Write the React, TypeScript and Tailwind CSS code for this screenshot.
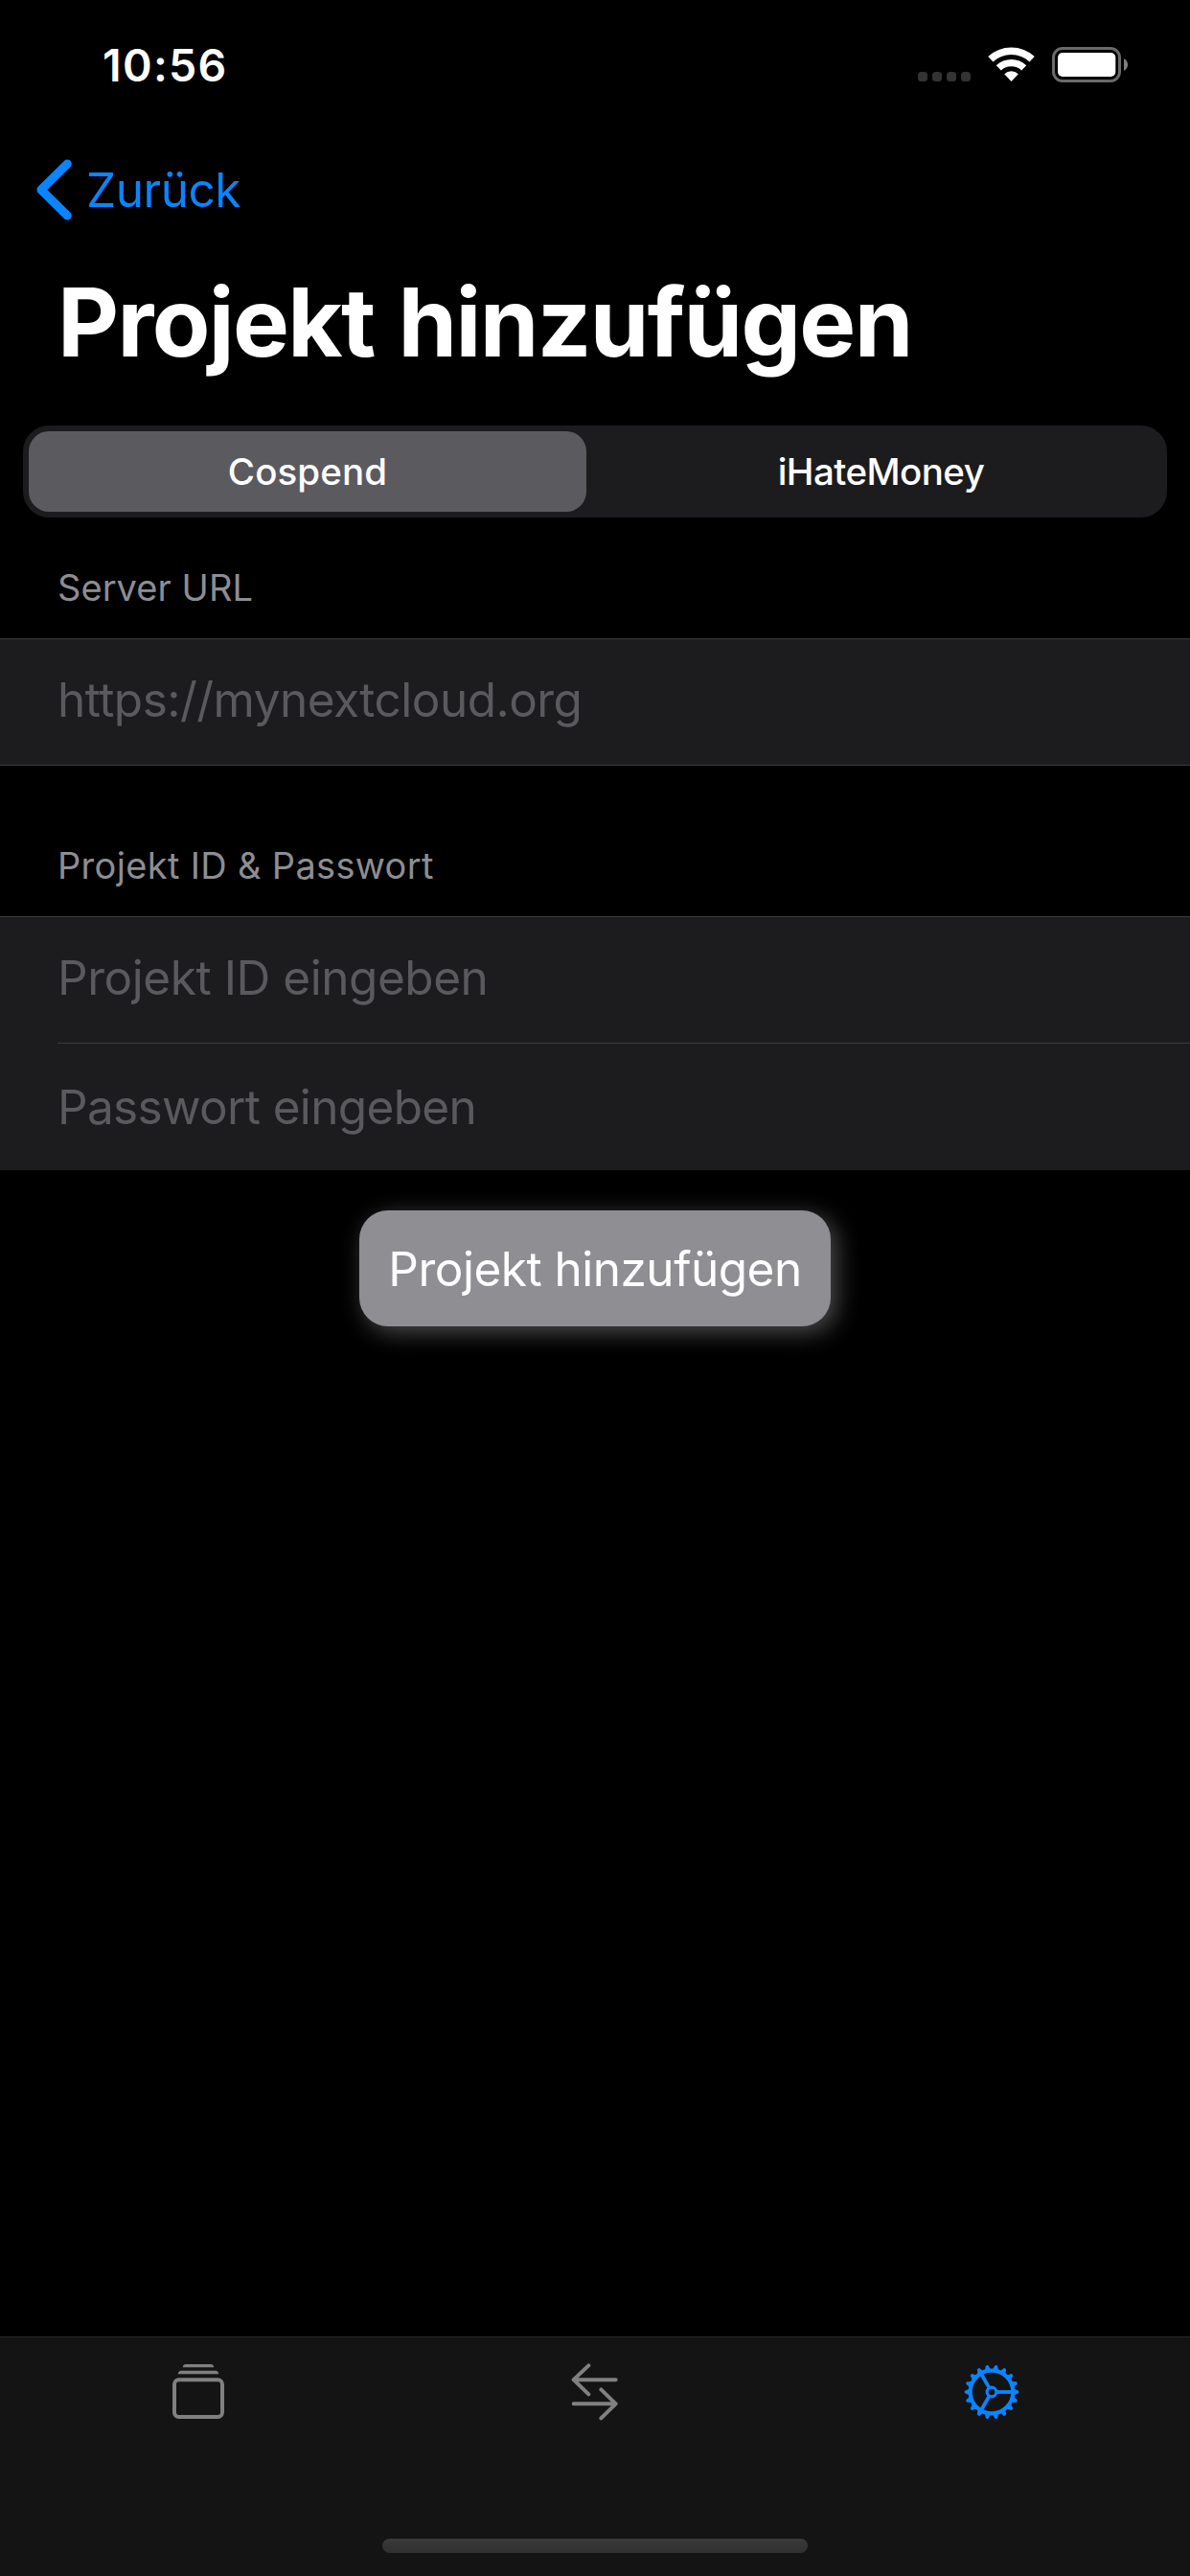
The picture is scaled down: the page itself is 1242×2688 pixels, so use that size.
import React from "react";

function StatusBar() {
  return (
    <header className="flex h-[132px] shrink-0 items-start justify-between pt-[38px] pr-[64px] pl-[107px]">
      <time className="text-[46.5px] leading-[60px] font-semibold tracking-[1.27px]">10:56</time>
      <div className="flex items-center pt-[11px]">
        <div className="mt-[25px] mr-[18px] flex gap-[5px]">
          {[0, 1, 2, 3].map((dot) => (
            <span key={dot} className="size-[10px] rounded-[3.5px] bg-[#333333]" />
          ))}
        </div>
        <svg className="mr-[18px] h-[37px] w-[49px]" viewBox="0 0 49 37" fill="none">
          <path d="M2.85 12.8A31.75 31.75 0 0 1 46.15 12.8" stroke="#fff" strokeWidth="7.6" />
          <path d="M11.3 21.85A19.35 19.35 0 0 1 37.7 21.85" stroke="#fff" strokeWidth="7.4" />
          <path d="M24.5 36L17.2 28.2A10.7 10.7 0 0 1 31.8 28.2Z" fill="#fff" />
        </svg>
        <svg className="h-[37px] w-[80px]" viewBox="0 0 80 37" fill="none">
          <rect x="1.5" y="1.5" width="69" height="34" rx="9.5" stroke="#6a6a6a" strokeWidth="3" />
          <rect x="6" y="6" width="60.3" height="25" rx="5" fill="#fff" />
          <path d="M75 12.3C77.5 13.3 79 15.7 79 18.5S77.5 23.7 75 24.7Z" fill="#808080" />
        </svg>
      </div>
    </header>
  );
}

function NavBar() {
  return (
    <nav className="flex h-[132px] shrink-0 items-center pl-[38px]">
      <button className="flex items-center text-[#0a84ff]">
        <svg className="mr-[14px] h-[64px] w-[38px]" viewBox="0 0 38 64" fill="none">
          <path d="M32.3 5L4.9 32L32.3 59" stroke="currentColor" strokeWidth="9" strokeLinecap="round" strokeLinejoin="round" />
        </svg>
        <span className="text-[49.5px] leading-[64px] tracking-[-0.45px]">Zurück</span>
      </button>
    </nav>
  );
}

function SegmentedControl() {
  return (
    <div className="mx-[24px] mt-[24px] flex h-[96px] shrink-0 rounded-[27px] bg-[#1c1c1e] p-[6px] text-[38.5px] leading-[48px] font-medium">
      <button className="flex w-[582px] items-center justify-center rounded-[21px] bg-[#5b5a5f] tracking-[0.1px]">Cospend</button>
      <button className="flex flex-1 items-center justify-center pl-[15px] tracking-[-0.56px]">iHateMoney</button>
    </div>
  );
}

function StackIcon() {
  return (
    <svg className="h-[58px] w-[54px]" viewBox="90 141 162 174" fill="none">
      <path d="M122 151Q124 141 132 141H210Q218 141 220 151Z" fill="#808080" />
      <path d="M107 171.500Q109 161 117 161H225Q233 161 235 171.500Z" fill="#808080" />
      <rect x="96" y="190" width="150" height="116" rx="14" stroke="#808080" strokeWidth="12" />
    </svg>
  );
}

function ArrowsIcon() {
  return (
    <svg className="h-[60px] w-[50px]" viewBox="109 137 150 180" fill="none" stroke="#808080" strokeWidth="12" strokeLinecap="round" strokeLinejoin="round">
      <path d="M249 188.500H117M164 144L117 188.500L164 234" />
      <path d="M117 264H249M203 219L249 264L203 309" />
    </svg>
  );
}

function GearIcon() {
  const teeth = Array.from({ length: 18 }, (_, i) => i * 20);
  return (
    <svg className="h-[60px] w-[60px]" viewBox="-90 -90 180 180" fill="none" stroke="#0a84ff">
      {teeth.map((angle) => (
        <path key={angle} d="M70 -9.500L84 -4Q86 0 84 4L70 9.500Z" fill="#0a84ff" stroke="none" transform={`rotate(${angle})`} />
      ))}
      <circle r="67" strokeWidth="12.5" />
      <circle r="14.500" strokeWidth="9.5" />
      {[0, 120, 240].map((angle) => (
        <path key={angle} d="M17 0H66" strokeWidth="11.5" transform={`rotate(${angle})`} />
      ))}
    </svg>
  );
}

export default function App() {
  return (
    <div className="flex h-[2688px] w-[1242px] flex-col overflow-hidden bg-black font-['Inter',sans-serif] text-white">
      <StatusBar />
      <NavBar />

      <main className="flex flex-1 flex-col">
        <h1 className="h-[156px] pl-[60px] text-[99px] leading-[144px] font-bold tracking-[-1.65px] [word-spacing:3px]">Projekt hinzufügen</h1>
        <SegmentedControl />

        <h2 className="h-[126px] pt-[49px] pl-[60px] text-[38px] leading-[48px] tracking-[0.06px] text-[#8d8d93]">Server URL</h2>
        <div className="h-[133px] border-y border-[#3b3b3d] bg-[#1c1c1e] pl-[60px] text-[49.5px] leading-[126px] tracking-[-0.53px] text-[#5a5a5e]">
          https://mynextcloud.org
        </div>

        <h2 className="h-[157px] pt-[80px] pl-[60px] text-[38px] leading-[48px] tracking-[0.33px] text-[#8d8d93]">Projekt ID &amp; Passwort</h2>
        <div className="h-[265px] border-t border-[#3b3b3d] bg-[#1c1c1e] pl-[60px] text-[49.5px] text-[#5a5a5e]">
          <div className="h-[132px] border-b border-[#3b3b3d] leading-[126px] tracking-[-0.45px]">Projekt ID eingeben</div>
          <div className="h-[132px] leading-[132px] tracking-[-0.65px]">Passwort eingeben</div>
        </div>

        <button className="mt-[42px] h-[121px] w-[492px] self-center rounded-[30px] bg-[#8e8e93] pt-px text-[49.5px] leading-[121px] tracking-[-0.5px] shadow-[6px_6px_24px_rgba(255,255,255,0.3)]">
          Projekt hinzufügen
        </button>
      </main>

      <footer className="flex h-[250px] shrink-0 flex-col items-center justify-between border-t border-[#292929] bg-[#141414] pb-[24px]">
        <div className="grid w-full grid-cols-3 pt-[27px]">
          <button className="flex h-[60px] items-center justify-center"><StackIcon /></button>
          <button className="flex h-[60px] items-center justify-center"><ArrowsIcon /></button>
          <button className="flex h-[60px] items-center justify-center"><GearIcon /></button>
        </div>
        <div className="h-[15px] w-[444px] rounded-full bg-linear-to-b from-[#3a3a3a] to-[#303030]" />
      </footer>
    </div>
  );
}
